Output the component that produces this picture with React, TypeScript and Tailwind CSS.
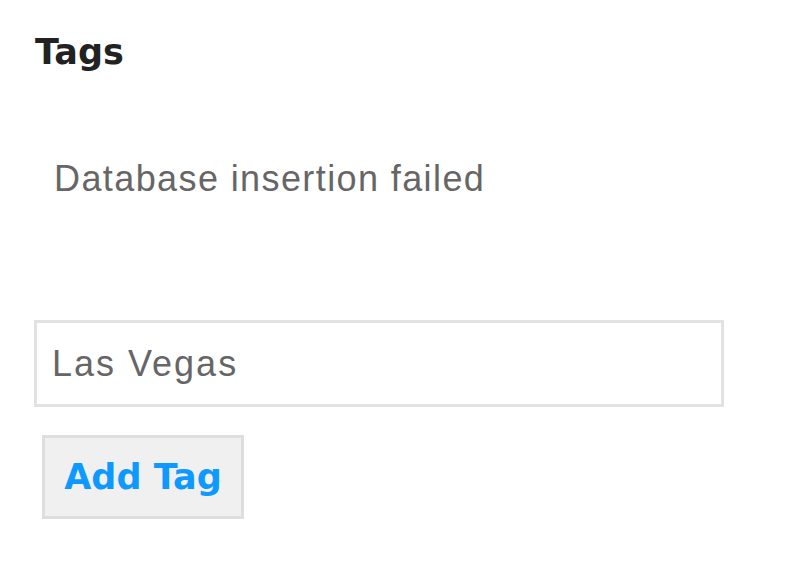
import React from "react";

export default function App() {
  return (
    <div className="w-[800px] h-[561px] bg-white overflow-hidden flex flex-col">
      <h1 className="pl-[35px] pt-[32px] text-[35px] leading-[40px] font-bold text-[#222222] font-['DejaVu_Sans',Verdana,sans-serif]">
        Tags
      </h1>
      <p className="pl-[54px] mt-[87px] text-[36px] leading-[40px] text-[#666666] tracking-[1.4px] font-['Liberation_Sans',Arial,sans-serif]">
        Database insertion failed
      </p>
      <div className="pl-[34px] mt-[121px] flex flex-col items-start">
        <input
          type="text"
          defaultValue="Las Vegas"
          className="w-[690px] h-[87px] border-[3px] border-[#e2e2e2] bg-white pl-[15px] text-[36px] text-[#666666] tracking-[2px] outline-none font-['Liberation_Sans',Arial,sans-serif]"
        />
        <button className="ml-[8px] mt-[28px] w-[202px] h-[84px] border-[3px] border-[#dedede] bg-[#f0f0f0] text-[35px] font-bold text-[#0d99ff] flex items-center justify-center font-['DejaVu_Sans',Verdana,sans-serif]">
          Add Tag
        </button>
      </div>
    </div>
  );
}
